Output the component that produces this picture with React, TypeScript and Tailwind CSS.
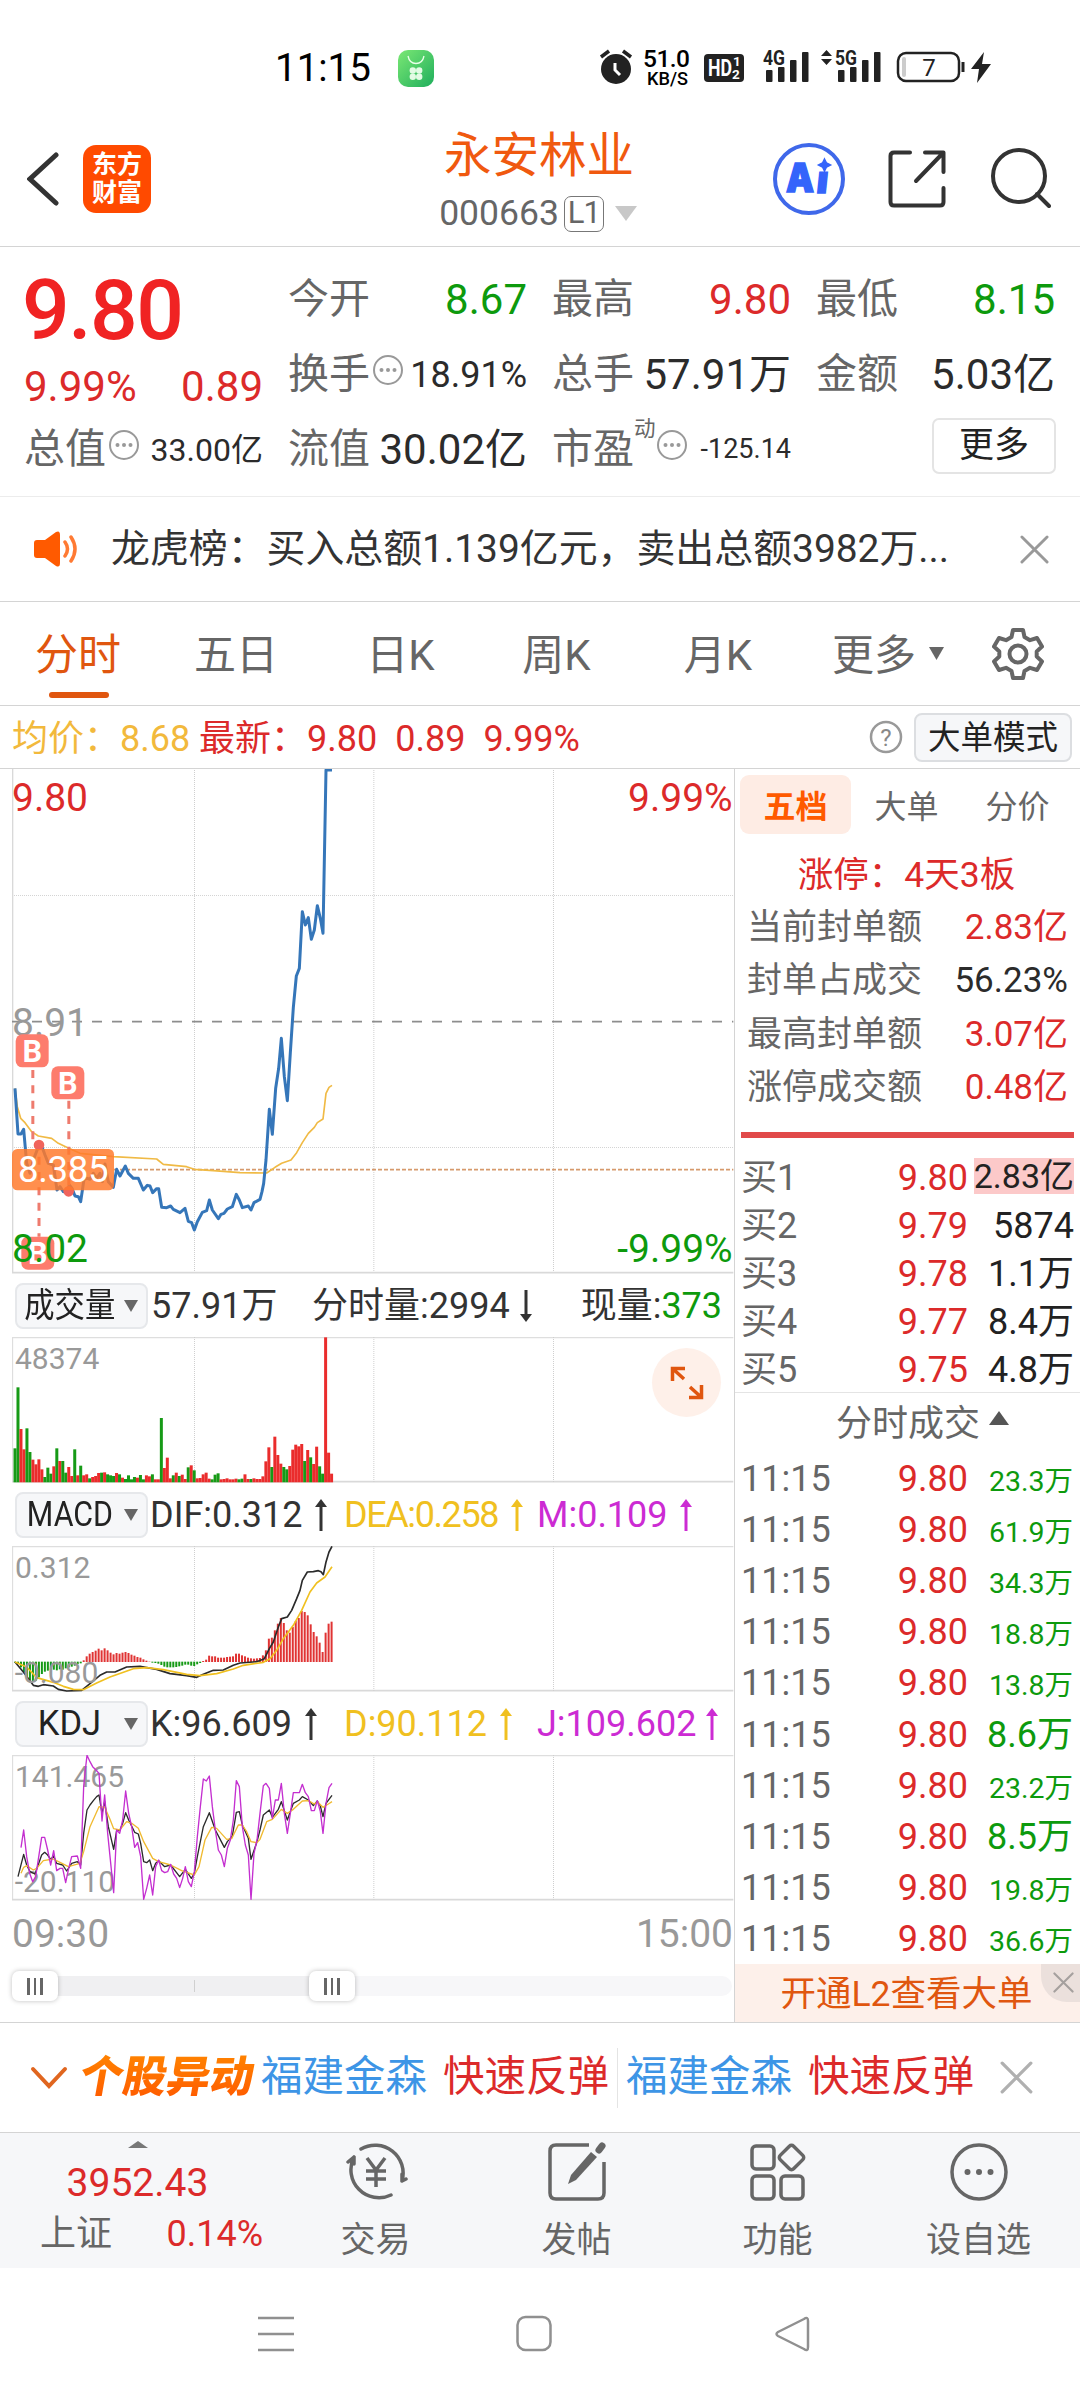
import React from "react";

const UP = "#dc2a2a";

// chart geometry is kept on a 3x grid, so one minute is 8.96 units wide
const STEP = 8.96;
const START = 45;

const PRICE =
  "45,985 54,1122 63,1122 71,1108 80,1210 90,1240 100,1200 117,1155 125,1158 135,1185 145,1210 160,1215 171,1290 180,1280 190,1295 200,1298 208,1275 216,1285 225,1308 235,1310 242,1325 252,1258 262,1255 270,1258 280,1240 290,1255 300,1240 307,1265 315,1212 325,1265 340,1282 350,1228 360,1248 376,1218 385,1240 400,1255 415,1255 430,1290 442,1276 450,1278 458,1298 470,1286 476,1286 485,1342 500,1343 512,1338 520,1348 540,1358 555,1345 565,1384 575,1388 583,1410 592,1385 607,1357 620,1352 628,1320 637,1350 655,1376 663,1363 672,1360 682,1347 697,1340 709,1303 718,1320 727,1343 745,1338 753,1350 762,1328 780,1318 786,1295 791,1270 798,1200 808,1048 817,1123 827,985 836,925 844,835 853,950 862,1022 871,878 880,742 889,648 898,625 907,455 916,495 925,473 934,538 943,510 952,437 961,475 969,520 978,30 996,30";
const AVERAGE =
  "45,985 52,1040 62,1075 75,1088 95,1115 115,1128 155,1135 175,1150 200,1162 240,1180 340,1190 470,1197 490,1213 560,1220 583,1228 640,1232 720,1238 800,1239 825,1222 845,1210 873,1200 890,1178 907,1148 925,1120 943,1102 952,1088 969,1077 978,1000 987,982 996,976";

const VOLUME =
  "534g 351g 476r 537r 474g 545g 568r 582r 567r 597r 620g 592g 610g 588r 534g 572r 572g 607g 590r 617r 537g 615r 586g 615r 612r 624g 620r 617r 608r 607g 606r 612g 615g 617g 608r 612g 622r 626g 615g 627g 620g 622r 614g 627g 615r 618r 612g 627r 627r 443g 593r 562r 624r 615g 607r 617g 613r 626r 591g 585r 600g 624r 623r 612r 607r 625r 627g 613g 609g 627r 626r 624r 627r 627r 625r 627g 625g 612r 626r 626g 624r 626r 626r 618r 573r 531r 590g 499r 554r 580r 590g 597g 587r 538r 523r 528r 521r 572g 539r 561g 581r 529r 588g 610g 201r 547r 610r".split(" ");

const MACD = [
  186, 190, 200, 215, 228, 238, 243, 240, 230, 220, 213, 210, 208, 207, 209, 206, 207, 203, 200, 198, 195, 190, 188,
  180, 168, 160, 155, 151, 145, 150, 144, 150, 157, 162, 158, 160, 157, 155, 158, 163, 166, 170, 172, 177, 181, 184,
  186, 187, 189, 193, 198, 200, 200, 200, 199, 197, 195, 192, 192, 195, 196, 191, 187, 182, 178, 166, 168, 168, 172,
  172, 172, 170, 169, 168, 160, 160, 165, 168, 172, 174, 175, 174, 173, 165, 150, 115, 112, 90, 70, 53, 68, 90, 97, 80,
  62, 53, 32, 35, 45, 72, 95, 108, 127, 155, 97, 70, 64,
];
const DIF =
  "45,185 70,215 100,255 115,258 130,253 160,257 175,267 200,272 245,270 270,250 300,225 320,215 345,215 380,200 420,198 470,207 510,220 560,226 590,231 610,222 640,210 670,209 700,195 720,188 770,184 793,175 808,145 820,125 835,80 845,55 862,50 875,30 890,-5 900,-30 907,-60 922,-85 940,-86 955,-89 963,-86 970,-77 978,-115 987,-145 996,-162";
const DEA =
  "45,185 80,200 110,232 160,246 190,258 220,267 250,268 290,248 330,230 400,205 440,202 490,208 560,222 600,226 650,220 700,206 730,195 790,186 810,175 830,150 850,115 880,75 905,30 930,-25 950,-52 975,-70 996,-101";

const K =
  "54,830 71,763 80,795 90,815 105,822 125,765 134,757 143,765 152,778 161,768 170,790 188,795 200,813 215,790 232,785 242,795 251,700 261,630 270,615 280,602 290,590 297,585 306,640 314,605 325,680 341,748 350,690 359,692 368,670 377,638 386,660 404,697 415,702 422,730 431,785 440,788 449,780 458,812 467,790 476,782 494,800 512,795 539,830 556,808 574,835 583,820 592,770 610,680 628,638 646,690 664,725 673,742 682,725 697,708 709,637 718,635 727,675 745,715 753,778 771,725 780,690 790,645 808,630 817,652 835,628 844,605 862,660 880,610 898,600 907,590 925,600 940,617 952,603 961,618 969,650 978,610 996,586";
const D =
  "63,820 71,802 80,797 100,810 110,805 130,782 160,777 180,787 205,800 240,790 251,755 270,680 297,620 314,622 330,658 341,686 359,690 380,665 395,670 415,685 431,725 458,775 476,785 512,795 545,812 583,825 597,800 615,720 635,682 650,685 680,718 695,716 715,675 727,675 740,695 753,725 771,728 780,718 800,665 817,658 844,628 862,640 880,628 907,603 925,602 943,612 952,605 969,622 985,612 996,605";
const J =
  "63,743 71,690 80,770 89,820 98,845 107,830 125,712 134,712 143,750 152,795 161,752 170,812 180,805 188,805 197,848 206,805 215,770 232,768 242,805 251,560 256,510 261,466 270,485 278,500 288,510 297,520 306,663 314,585 323,700 341,878 350,690 359,700 368,660 377,573 386,640 395,680 404,742 413,728 422,770 431,898 440,865 449,825 458,885 467,800 476,780 485,812 494,818 503,815 512,793 521,822 530,835 539,863 548,835 556,800 565,845 574,860 583,815 592,710 601,620 610,537 619,543 628,528 637,620 646,690 655,750 664,765 673,800 682,745 691,720 700,660 709,542 718,560 727,680 736,735 745,765 753,898 762,760 771,720 780,640 790,557 798,550 808,565 817,655 826,600 835,600 844,550 853,640 862,700 871,640 880,578 898,578 907,553 916,578 925,590 934,632 943,632 952,602 961,635 969,700 978,610 987,563 996,550";

const ORDERS = [
  ["买1", "9.80", "2.83亿"],
  ["买2", "9.79", "5874"],
  ["买3", "9.78", "1.1万"],
  ["买4", "9.77", "8.4万"],
  ["买5", "9.75", "4.8万"],
];
const TRADES = ["23.3万", "61.9万", "34.3万", "18.8万", "13.8万", "8.6万", "23.2万", "8.5万", "19.8万", "36.6万"];
const LIMITS = [
  { label: "当前封单额", value: "2.83亿", color: "text-[#dc2a2a]" },
  { label: "封单占成交", value: "56.23%", color: "text-[#2b2b2b]" },
  { label: "最高封单额", value: "3.07亿", color: "text-[#dc2a2a]" },
  { label: "涨停成交额", value: "0.48亿", color: "text-[#dc2a2a]" },
];

const Line = ({ points, color, width = 4 }: { points: string; color: string; width?: number }) => (
  <polyline points={points} fill="none" stroke={color} strokeWidth={width} strokeLinejoin="round" />
);

const Grid = ({ top, bottom }: { top: number; bottom: number }) => (
  <g stroke="#cfcfcf" strokeWidth="3" strokeDasharray="3 3">
    {[583.5, 1121.5, 1660.5].map((x) => (
      <path key={x} d={`M${x} ${top}V${bottom}`} />
    ))}
  </g>
);

const Info = () => (
  <svg viewBox="0 0 32 32" className="mb-[10px] ml-[2px] size-[32px] shrink-0">
    <circle cx="16" cy="16" r="14" fill="none" stroke="#999" strokeWidth="2" />
    <g fill="#999">
      <circle cx="9.5" cy="16" r="2" />
      <circle cx="16" cy="16" r="2" />
      <circle cx="22.5" cy="16" r="2" />
    </g>
  </svg>
);

const Cross = ({ className }: { className: string }) => (
  <svg viewBox="0 0 30 30" className={className} fill="none" stroke="currentColor" strokeWidth="3" strokeLinecap="round">
    <path d="M2 2l26 26M28 2L2 28" />
  </svg>
);

const Arrow = ({ down = false, className = "" }: { down?: boolean; className?: string }) => (
  <svg viewBox="0 0 12 32" className={`h-[32px] w-[12px] shrink-0 ${down ? "rotate-180" : ""} ${className}`}>
    <path d="M6 4v28" stroke="currentColor" strokeWidth="3" />
    <path d="M6 0l6 8H0z" fill="currentColor" />
  </svg>
);

const Picker = ({ label, narrow = false }: { label: string; narrow?: boolean }) => (
  <div className="flex h-[46px] w-[133px] shrink-0 items-center rounded-[8px] border-2 border-[#e6e8eb] bg-[#f6f7f9] text-[#222]">
    <span className="flex w-[105px] justify-center">
      <span className={`text-[34.5px] ${narrow ? "scale-x-[0.88]" : ""}`}>{label}</span>
    </span>
    <svg viewBox="0 0 14 12" className="ml-[2px] h-[12px] w-[14px]">
      <path d="M0 0h14L7 12z" fill="#666" />
    </svg>
  </div>
);

const Signal = ({ x, label }: { x: number; label: string }) => (
  <g fill="#222">
    <text x={x - 3} y="35" fontSize="21" fontWeight="700" textLength="22" lengthAdjust="spacingAndGlyphs">
      {label}
    </text>
    <rect x={x} y="40" width="6.5" height="12" rx="1" />
    <rect x={x + 12} y="37" width="6.5" height="15" rx="1" />
    <rect x={x + 24} y="30" width="6.5" height="22" rx="1" />
    <rect x={x + 36} y="22" width="6.5" height="30" rx="1" />
  </g>
);

const StatusBar = () => (
  <div className="flex h-[136px] items-center pl-[275px] text-black">
    <span className="w-[123px] text-[38.5px]">11:15</span>
    <svg viewBox="0 0 36 37" className="h-[37px] w-[36px]">
      <defs>
        <linearGradient id="leaf" x1="0" y1="0" x2="1" y2="1">
          <stop offset="0" stopColor="#7be874" />
          <stop offset="1" stopColor="#1fae5c" />
        </linearGradient>
      </defs>
      <rect width="36" height="37" rx="10" fill="url(#leaf)" />
      <path d="M10 6c2 10 14 10 16 0" fill="none" stroke="#e9ffe9" strokeWidth="1.3" />
      <g fill="#e3fbe5">
        <circle cx="14.8" cy="20.5" r="3.2" />
        <circle cx="21.2" cy="20.5" r="3.2" />
        <circle cx="14.8" cy="26.8" r="3.2" />
        <circle cx="21.2" cy="26.8" r="3.2" />
      </g>
    </svg>
    <svg viewBox="590 0 420 76" className="ml-[156px] h-[76px] w-[420px]">
      <circle cx="616" cy="39" r="15" fill="#222" />
      <path d="M601 27l8-6M631 27l-8-6" stroke="#222" strokeWidth="3.5" />
      <path d="M615 33v7l5 5" fill="none" stroke="#fff" strokeWidth="3" />
      <text x="643" y="37" fontSize="24.5" fontWeight="500" textLength="47">51.0</text>
      <text x="647" y="55" fontSize="19" fontWeight="500" textLength="41" lengthAdjust="spacingAndGlyphs">KB/S</text>
      <rect x="704" y="24" width="40" height="28" rx="4" fill="#222" />
      <text x="708" y="46" fontSize="23" fontWeight="700" fill="#fff" textLength="24" lengthAdjust="spacingAndGlyphs">HD</text>
      <text x="733" y="36" fontSize="13.5" fontWeight="700" fill="#fff">1</text>
      <text x="732" y="49" fontSize="13.5" fontWeight="700" fill="#fff">2</text>
      <Signal x={766} label="4G" />
      <path d="M826.500 20l5.500 6h-11zM826.500 35l5.500-6h-11z" fill="#222" />
      <Signal x={838} label="5G" />
      <rect x="898" y="23" width="61" height="28" rx="8" fill="#fff" stroke="#222" strokeWidth="2.500" />
      <rect x="902" y="27" width="4" height="20" rx="2" fill="#ccc" />
      <path d="M963 32v10" stroke="#222" strokeWidth="3" />
      <text x="929" y="46" fontSize="24" textAnchor="middle" fill="#222">7</text>
      <path d="M984 22l-13 17h8l-2 14 14-19h-9z" fill="#222" />
    </svg>
  </div>
);

const Header = () => (
  <header className="flex h-[111px] items-center border-b-[1.5px] border-[#d4d4d4] pb-[24px]">
    <svg viewBox="0 0 32 54" className="ml-[27px] h-[54px] w-[32px]" fill="none" stroke="#333" strokeWidth="5" strokeLinecap="round">
      <path d="M29 3L3 27l26 24" />
    </svg>
    <div className="ml-[24px] flex size-[68px] flex-col items-center justify-center rounded-[13px] bg-[#ff4a00] text-[25px] leading-[28px] font-bold text-white">
      <span>东方</span>
      <span>财富</span>
    </div>
    <div className="mt-[4px] ml-[273px] flex w-[230px] flex-col items-center gap-[9px]">
      <h1 className="h-[56px] text-[47.500px] leading-[52px] text-[#f0590f]">永安林业</h1>
      <div className="flex h-[37px] items-center pr-[2px] text-[35.500px] text-[#666]">
        <span>000663</span>
        <span className="ml-[5px] flex h-[36px] w-[40px] items-center justify-center rounded-[7px] border-[1.5px] border-[#777] text-[31px] tracking-[-1px]">
          L1
        </span>
        <svg viewBox="0 0 22 15" className="ml-[11px] h-[15px] w-[22px]">
          <path d="M0 0h22L11 15z" fill="#c8c8c8" />
        </svg>
      </div>
    </div>
    <svg viewBox="0 0 72 72" className="ml-[119px] size-[72px]">
      <circle cx="36" cy="36" r="34" fill="none" stroke="#3f68ea" strokeWidth="4" />
      <g fill="#3464fb" stroke="#3464fb" strokeWidth="1.500" fontFamily="Inter" fontWeight="900">
        <text x="13" y="49" fontSize="40" textLength="28" lengthAdjust="spacingAndGlyphs">A</text>
        <text x="43" y="50" fontSize="38" transform="skewX(-6) translate(5 0)">ı</text>
      </g>
      <path d="M51.500 16l2 4 4 2-4 2-2 4-2-4-4-2 4-2z" fill="#3464fb" stroke="#3464fb" strokeWidth="1.500" />
    </svg>
    <svg viewBox="0 0 58 58" className="ml-[43px] size-[58px]" fill="none" stroke="#333" strokeWidth="4" strokeLinecap="round" strokeLinejoin="round">
      <path d="M22 2.500H6q-3.500 0-3.500 3.500v46q0 3.500 3.500 3.500h46q3.500 0 3.500-3.500V38" />
      <path d="M37 2.500h18.500V22M55 3L28 31" />
    </svg>
    <svg viewBox="0 0 62 62" className="ml-[43px] size-[62px]" fill="none" stroke="#333" strokeWidth="4" strokeLinecap="round">
      <circle cx="30" cy="28" r="26" />
      <path d="M48 46l12 12" />
    </svg>
  </header>
);

interface StatProps {
  label: string;
  value: string;
  tone?: string;
  info?: boolean;
  note?: string;
}

const Stat = ({ label, value, tone = "text-[42px] text-[#2b2b2b]", info, note }: StatProps) => (
  <div className="flex h-[75px] items-center justify-between whitespace-nowrap">
    <div className="flex items-center">
      <span className="-ml-px text-[41px] text-[#666]">{label}</span>
      {note && <span className="mb-[42px] -mr-[2px] text-[21.500px] leading-none text-[#666]">{note}</span>}
      {info && <Info />}
    </div>
    <span className={tone}>{value}</span>
  </div>
);

const Quote = () => (
  <section className="flex h-[250px] gap-[26px] border-b-[1.5px] border-[#ececec] px-[25px] pt-[15px]">
    <div className="w-[238px]">
      <div className="-ml-[3px] flex h-[98px] items-center text-[84px] leading-none font-medium tracking-[-1.5px] text-[#f02323]">
        9.80
      </div>
      <div className="flex h-[52px] items-center justify-between text-[42px] text-[#dc2a2a]">
        <span className="-ml-px">9.99%</span>
        <span>0.89</span>
      </div>
      <Stat label="总值" value="33.00亿" info tone="text-[32px] text-[#2b2b2b]" />
    </div>
    <div className="grid flex-1 auto-rows-[75px] grid-cols-3 gap-x-[26px]">
      <Stat label="今开" value="8.67" tone="text-[42px] text-[#0d9a0d]" />
      <Stat label="最高" value="9.80" tone="text-[42px] text-[#dc2a2a]" />
      <Stat label="最低" value="8.15" tone="text-[42px] text-[#0d9a0d]" />
      <Stat label="换手" value="18.91%" info tone="text-[36px] text-[#2b2b2b]" />
      <Stat label="总手" value="57.91万" />
      <Stat label="金额" value="5.03亿" />
      <Stat label="流值" value="30.02亿" />
      <Stat label="市盈" value="-125.14" info note="动" tone="text-[27px] text-[#2b2b2b]" />
      <button className="mt-[6px] -mr-px flex h-[56px] w-[124px] items-center justify-center justify-self-end rounded-[7px] border-2 border-[#e4e4e4] text-[35px] text-[#222]">
        更多
      </button>
    </div>
  </section>
);

const Notice = () => (
  <div className="flex h-[105px] items-center border-b-[1.5px] border-[#d4d4d4]">
    <svg viewBox="0 0 46 36" className="ml-[34px] h-[36px] w-[46px]" fill="#ff5a00">
      <path d="M3 9h8L22 1q4-2 4 3v28q0 5-4 3L11 27H3q-3 0-3-3V12q0-3 3-3z" />
      <path d="M31 11q5 7 0 14M37 6q8 12 0 24" fill="none" stroke="#ff7a33" strokeWidth="3.500" strokeLinecap="round" />
    </svg>
    <span className="ml-[31px] w-[881px] text-[38.900px] whitespace-nowrap text-[#333]">龙虎榜：买入总额1.139亿元，卖出总额3982万...</span>
    <Cross className="ml-[28px] size-[29px] text-[#999]" />
  </div>
);

const Tabs = () => (
  <nav className="flex h-[104px] items-center border-b-[1.5px] border-[#d4d4d4] text-[42px] text-[#666]">
    <span className="relative flex h-full w-[156px] items-center justify-center pt-[4px] text-[43px] text-[#e0560f]">
      分时
      <i className="absolute bottom-[7px] left-[49px] h-[6px] w-[60px] rounded-full bg-[#e0560f]" />
    </span>
    <span className="w-[160px] pt-[4px] text-center">五日</span>
    <span className="w-[169px] pt-[4px] text-center">日K</span>
    <span className="w-[143px] pt-[4px] text-center">周K</span>
    <span className="w-[180px] pt-[4px] text-center">月K</span>
    <span className="ml-[24px] pt-[4px]">更多</span>
    <svg viewBox="0 0 15 13" className="ml-[13px] h-[13px] w-[15px]">
      <path d="M0 0h15L7.500 13z" fill="#666" />
    </svg>
    <svg viewBox="0 0 54 54" className="ml-[47px] size-[54px]" fill="none" stroke="#666" strokeWidth="4" strokeLinejoin="round">
      <path d="M22 3h10l1.500 7 5.500 3.200 7-2.200 5 8.600-5.300 4.800v5.200l5.300 4.800-5 8.600-7-2.200-5.500 3.200L32 51H22l-1.500-7-5.500-3.200-7 2.200-5-8.600 5.300-4.800v-5.200L3 19.600l5-8.600 7 2.200 5.500-3.200z" />
      <circle cx="27" cy="27" r="8.500" />
    </svg>
  </nav>
);

const Summary = () => (
  <div className="flex h-[63px] items-center border-b-[1.5px] border-[#d4d4d4] text-[36px] whitespace-nowrap">
    <span className="ml-[12px] w-[187px] pt-[3px] text-[#f2b93c]">均价：8.68</span>
    <span className="pt-[3px] text-[#dc2a2a]">最新：9.80</span>
    <span className="ml-[18px] pt-[3px] text-[#dc2a2a]">0.89</span>
    <span className="ml-[18px] pt-[3px] text-[#dc2a2a]">9.99%</span>
    <svg viewBox="0 0 34 34" className="ml-auto size-[34px]">
      <circle cx="17" cy="17" r="15" fill="none" stroke="#999" strokeWidth="2.500" />
      <text x="17" y="25.500" fontSize="24" textAnchor="middle" fill="#888">?</text>
    </svg>
    <span className="mr-[8px] ml-[11px] flex h-[49px] w-[158px] items-center justify-center rounded-[8px] border-2 border-[#dcdee1] bg-[#f6f7f9] pt-[2px] text-[32.5px] text-[#222]">
      大单模式
    </span>
  </div>
);

const Badge = ({ x, y }: { x: number; y: number }) => (
  <g>
    <rect x={x} y={y} width="99" height="99" rx="20" fill="#fd7c6d" />
    <text x={x + 49.5} y={y + 82} fontSize="92" fontWeight="700" fill="#fff" textAnchor="middle">
      B
    </text>
  </g>
);

const PriceChart = () => (
  <svg viewBox="36 27 2166 1518" className="ml-[12px] h-[506px] w-[722px] shrink-0">
    <Grid top={24} bottom={1538} />
    <g stroke="#d4d4d4" strokeWidth="3" strokeDasharray="3 3">
      <path d="M36 406.500H2200M36 1162.500H2200" />
    </g>
    <path d="M37.500 24V1538H2200" fill="none" stroke="#d9d9d9" strokeWidth="5" />
    <path d="M36 785H2200" stroke="#8d8d8d" strokeWidth="5" strokeDasharray="30 30" />
    <path d="M342 1229H2200" stroke="#d69a6c" strokeWidth="5" strokeDasharray="12 6" />
    <Line points={AVERAGE} color="#f0ba45" width={5} />
    <Line points={PRICE} color="#3576b9" width={9} />
    <text x="36" y="827" fontSize="117" fill="#999">8.91</text>
    <g stroke="#ee7b6e" strokeWidth="9" strokeDasharray="24 22">
      <path d="M98.500 930V1160M206.500 1022V1280M117 1190V1430" />
    </g>
    <circle cx="117" cy="1155" r="16" fill="#f0645c" />
    <circle cx="206" cy="1294" r="16" fill="#f0645c" />
    <Badge x={47} y={823} />
    <Badge x={154} y={919} />
    <Badge x={64} y={1430} />
    <rect x="36" y="1167" width="306" height="124" rx="16" fill="#ff7a2b" fillOpacity=".84" />
    <text x="54" y="1265" fontSize="110" fill="#fff" textLength="272">8.385</text>
    <text x="36" y="153" fontSize="117" fill={UP}>9.80</text>
    <text x="2198" y="153" fontSize="117" fill={UP} textAnchor="end">9.99%</text>
    <text x="36" y="1506" fontSize="117" fill="#0d9a0d">8.02</text>
    <text x="2198" y="1506" fontSize="117" fill="#0d9a0d" textAnchor="end">-9.99%</text>
  </svg>
);

const VolumeChart = () => (
  <div className="relative ml-[12px] h-[146px] w-[722px]">
    <svg viewBox="36 200 2166 438" className="size-full">
      <path d="M36 202H2200M37.500 200V635" stroke="#dedede" strokeWidth="4" />
      <path d="M36 634H2200" stroke="#d9d9d9" strokeWidth="5" />
      <Grid top={200} bottom={635} />
      {VOLUME.map((v, i) => {
        const top = parseInt(v, 10);
        return (
          <rect key={i} x={START + STEP * i - 4.5} y={top} width="9" height={636 - top} fill={v.endsWith("g") ? "#169a16" : "#ea2c2c"} />
        );
      })}
      <text x="45" y="296" fontSize="90" fill="#999">48374</text>
    </svg>
    <div className="absolute top-[11px] right-[13px] flex size-[69px] items-center justify-center rounded-full bg-[#fef0e9]">
      <svg viewBox="0 0 34 34" className="size-[34px]" fill="none" stroke="#e0560f" strokeWidth="3.500">
        <path d="M15 2.500H2.500V15M2.500 2.500L14 13M19 31.500h12.500V19M31.500 31.500L20 21" />
      </svg>
    </div>
  </div>
);

const MacdChart = () => (
  <svg viewBox="36 -163 2166 438" className="ml-[12px] h-[146px] w-[722px] shrink-0">
    <path d="M36 -161H2200M37.500 -163V272" stroke="#dedede" strokeWidth="4" />
    <path d="M36 271H2200" stroke="#d9d9d9" strokeWidth="5" />
    <Grid top={-163} bottom={272} />
    {MACD.map((v, i) => (
      <rect key={i} x={START + STEP * i - 3} y={Math.min(v, 184)} width="6" height={Math.abs(v - 184) + 1} fill={v > 184 ? "#169a16" : "#e03434"} />
    ))}
    <Line points={DIF} color="#2b2b2b" width={5} />
    <Line points={DEA} color="#f0c020" width={5} />
    <text x="45" y="-67" fontSize="90" fill="#999">0.312</text>
    <text x="44" y="248" fontSize="90" fill="#999">-0.080</text>
  </svg>
);

const KdjChart = () => (
  <svg viewBox="36 465 2166 438" className="ml-[12px] h-[146px] w-[722px] shrink-0">
    <path d="M36 467H2200M37.500 465V900" stroke="#dedede" strokeWidth="4" />
    <path d="M36 899H2200" stroke="#d9d9d9" strokeWidth="5" />
    <Grid top={465} bottom={900} />
    <text x="45" y="561" fontSize="90" fill="#999">141.465</text>
    <text x="44" y="876" fontSize="90" fill="#999">-20.110</text>
    <Line points={K} color="#2b2b2b" />
    <Line points={D} color="#f0ba30" />
    <Line points={J} color="#c42fd0" />
  </svg>
);

const Handle = ({ className }: { className: string }) => (
  <div className={`absolute -top-[5px] flex h-[30px] w-[46px] items-center justify-center gap-[4px] rounded-[7px] bg-white shadow-[0_0_5px_rgba(0,0,0,0.25)] ${className}`}>
    <i className="h-[17px] w-[2.500px] bg-[#666]" />
    <i className="h-[17px] w-[2.500px] bg-[#666]" />
    <i className="h-[17px] w-[2.500px] bg-[#666]" />
  </div>
);

const Charts = () => (
  <div className="flex w-[735px] shrink-0 flex-col border-r-[1.5px] border-[#d4d4d4]">
    <PriceChart />
    <div className="flex h-[62px] items-center pl-[15px] text-[36px] whitespace-nowrap text-[#333]">
      <Picker label="成交量" narrow />
      <span className="ml-[3px] w-[161px]">57.91万</span>
      <span>分时量:2994</span>
      <Arrow down className="ml-[10px]" />
      <span className="ml-[49px]">
        现量:<span className="text-[#0d9a0d]">373</span>
      </span>
    </div>
    <VolumeChart />
    <div className="flex h-[63px] items-center pl-[15px] text-[36px] whitespace-nowrap text-[#333]">
      <Picker label="MACD" narrow />
      <span className="ml-[2px] flex w-[194px] items-center gap-[13px]">
        DIF:0.312 <Arrow />
      </span>
      <span className="flex w-[193px] items-center gap-[13px] tracking-[-1.4px] text-[#f0c020]">
        DEA:0.258 <Arrow />
      </span>
      <span className="flex items-center gap-[12px] text-[#cc2bd3]">
        M:0.109 <Arrow />
      </span>
    </div>
    <MacdChart />
    <div className="flex h-[63px] items-center pl-[15px] text-[36px] whitespace-nowrap text-[#333]">
      <Picker label="KDJ" />
      <span className="ml-[2px] flex w-[194px] items-center gap-[13px]">
        K:96.609 <Arrow />
      </span>
      <span className="flex w-[193px] items-center gap-[13px] text-[#f0c020]">
        D:90.112 <Arrow />
      </span>
      <span className="flex items-center gap-[10px] text-[#cc2bd3]">
        J:109.602 <Arrow />
      </span>
    </div>
    <KdjChart />
    <div className="flex h-[66px] items-center justify-between pr-[1px] pl-[12px] text-[39px] text-[#999]">
      <span>09:30</span>
      <span>15:00</span>
    </div>
    <div className="relative mt-[9px] ml-[12px] h-[20px] w-[720px] rounded-full bg-[#f7f7f9]">
      <div className="flex h-full w-[320px] items-center rounded-l-full bg-[#f0f0f2] pl-[182px]">
        <i className="h-[12px] w-px bg-[#d0d0d0]" />
      </div>
      <Handle className="left-0" />
      <Handle className="left-[297px]" />
    </div>
  </div>
);

const OrderBook = () => (
  <div className="flex flex-1 flex-col whitespace-nowrap">
    <div className="mt-[6px] ml-[5px] flex h-[60px] items-center text-[32px] text-[#666]">
      <span className="flex h-full w-[111px] items-center justify-center rounded-[9px] bg-[#feece4] pt-[4px] font-bold text-[#ff5a00]">
        五档
      </span>
      <span className="w-[111px] pt-[4px] text-center">大单</span>
      <span className="w-[111px] pt-[4px] text-center">分价</span>
    </div>
    <div className="mt-[15px] flex h-[52px] items-center justify-center pr-[2px] text-[35.500px] text-[#dc2a2a]">涨停：4天3板</div>
    {LIMITS.map((row) => (
      <div key={row.label} className="flex h-[54px] items-center justify-between pr-[12px] pl-[12px] text-[35px]">
        <span className="text-[#666]">{row.label}</span>
        <span className={row.color}>{row.value}</span>
      </div>
    ))}
    <div className="mx-[6px] mt-[17px] mb-[16px] h-[6px] bg-[#e14a4a]" />
    {ORDERS.map(([label, price, amount], i) => (
      <div key={label} className="flex h-[48px] items-center pr-[6px] pl-[6px] text-[36px]">
        <span className="w-[100px] text-[#666]">{label}</span>
        <span className="w-[127px] text-right text-[#dc2a2a]">{price}</span>
        {i === 0 ? (
          <span className="mb-[4px] ml-auto flex h-[36px] w-[100px] items-center justify-end bg-[#fcc9c9] text-[34px] text-[#222]">
            {amount}
          </span>
        ) : (
          <span className="ml-auto text-[#222]">{amount}</span>
        )}
      </div>
    ))}
    <div className="-mt-[2px] flex h-[60px] items-center justify-center border-t-[1.5px] border-[#e4e4e4] pt-[3px] pl-[30px] text-[36px] text-[#666]">
      分时成交
      <svg viewBox="0 0 20 14" className="mb-[11px] ml-[9px] h-[14px] w-[20px]">
        <path d="M10 0l10 14H0z" fill="#555" />
      </svg>
    </div>
    {TRADES.map((amount, i) => (
      <div key={i} className="flex h-[51.200px] items-baseline pr-[7px] pl-[6px] text-[36px] leading-[54px]">
        <span className="w-[100px] text-[#666]">11:15</span>
        <span className="w-[127px] text-right text-[#dc2a2a]">9.80</span>
        <span className={`ml-auto text-[#0d9a0d] ${amount.length > 4 ? "text-[28.5px]" : ""}`}>{amount}</span>
      </div>
    ))}
    <div className="relative mt-auto flex h-[59px] items-center justify-center bg-[#fdf0ea] pt-[4px] pr-[2px] text-[35.500px] text-[#e0560f]">
      开通L2查看大单
      <span className="absolute top-0 right-0 flex h-[38px] w-[39px] items-center justify-center rounded-bl-[26px] bg-[#ebe0dc]">
        <Cross className="ml-[6px] size-[21px] text-[#a5a09e]" />
      </span>
    </div>
  </div>
);

const Ticker = () => (
  <div className="flex h-[111px] items-center border-y-[1.5px] border-[#d4d4d4] text-[41.500px] whitespace-nowrap">
    <svg viewBox="0 0 38 24" className="ml-[30px] h-[24px] w-[38px]" fill="none" stroke="#e0661f" strokeWidth="4" strokeLinecap="round">
      <path d="M3 3l16 17L35 3" />
    </svg>
    <span className="ml-[12px] w-[181px] -skew-x-10 bg-gradient-to-b from-[#ff8a00] to-[#ff4e00] bg-clip-text text-[43.500px] font-black text-transparent">
      个股异动
    </span>
    <span className="text-[#3d95e6]">福建金森</span>
    <span className="ml-[16px] text-[#dc2a2a]">快速反弹</span>
    <i className="ml-[8px] h-[60px] w-px bg-[#e4e4e4]" />
    <span className="ml-[8px] text-[#3d95e6]">福建金森</span>
    <span className="ml-[16px] text-[#dc2a2a]">快速反弹</span>
    <Cross className="ml-[26px] size-[33px] text-[#b0b0b0]" />
  </div>
);

const NavItem = ({ label, children }: { label: string; children: React.ReactNode }) => (
  <div className="flex w-[201px] flex-col items-center pt-[7px]">
    <svg viewBox="0 0 64 64" className="size-[64px]" fill="none" stroke="#666" strokeWidth="3.500">
      {children}
    </svg>
    <span className="mt-[10px] text-[35px] leading-[54px] text-[#666]">{label}</span>
  </div>
);

const BottomNav = () => (
  <nav className="flex h-[135px] bg-[#f6f7f9]">
    <div className="flex w-[275px] flex-col items-center pt-[8px]">
      <svg viewBox="0 0 20 7" className="h-[7px] w-[20px]">
        <path d="M10 0l10 7H0z" fill="#777" />
      </svg>
      <span className="mt-[7px] text-[39px] leading-[56px] text-[#dc2a2a]">3952.43</span>
      <div className="ml-[28px] flex w-[223px] justify-between text-[36px] leading-[46px] text-[#dc2a2a]">
        <span className="text-[#666]">上证</span>
        <span>0.14%</span>
      </div>
    </div>
    <NavItem label="交易">
      <path d="M17 9A28 28 0 0 1 58 41M4 22l6-5M47 55A28 28 0 0 1 10 17M10 17V24M58 41l4-2M58 41v-7" strokeLinecap="round" />
      <path d="M23 18l9 12 9-12M32 30v17M22 31h20M22 39h20" />
    </NavItem>
    <NavItem label="发帖">
      <path d="M44 5H11q-6 0-6 6v42q0 6 6 6h42q6 0 6-6V22" />
      <path d="M54 10l3-4" strokeWidth="7" strokeLinecap="round" />
      <path d="M46 12l6 5-21 23-8 4 3-9z" fill="#666" stroke="none" />
    </NavItem>
    <NavItem label="功能">
      <rect x="6" y="6" width="22" height="23" rx="4" />
      <rect x="6" y="36" width="22" height="23" rx="4" />
      <rect x="35" y="36" width="22" height="23" rx="4" />
      <rect x="36" y="8" width="19" height="19" rx="3" transform="rotate(45 45.500 17.500)" />
    </NavItem>
    <NavItem label="设自选">
      <circle cx="32" cy="32" r="27" />
      <g fill="#666" stroke="none">
        <circle cx="20.500" cy="32" r="3" />
        <circle cx="32" cy="32" r="3" />
        <circle cx="43.500" cy="32" r="3" />
      </g>
    </NavItem>
  </nav>
);

const SystemBar = () => (
  <div className="flex h-[132px] items-center pl-[258px]">
    <svg viewBox="0 0 552 38" className="h-[38px] w-[552px]" fill="none" stroke="#909090" strokeWidth="2.500" strokeLinejoin="round">
      <path d="M0 3h36M0 19h36M0 35h36" />
      <rect x="259.500" y="2" width="33" height="33" rx="8" />
      <path d="M546 4q4-3 4 2v26q0 5-4 2l-26-13q-3-2 0-4z" />
    </svg>
  </div>
);

export default function App() {
  return (
    <div className="flex h-[2400px] w-[1080px] flex-col overflow-hidden bg-white font-['Roboto','Noto_Sans_CJK_SC',sans-serif] *:shrink-0">
      <StatusBar />
      <Header />
      <Quote />
      <Notice />
      <Tabs />
      <Summary />
      <main className="flex h-[1253px]">
        <Charts />
        <OrderBook />
      </main>
      <Ticker />
      <BottomNav />
      <SystemBar />
    </div>
  );
}
